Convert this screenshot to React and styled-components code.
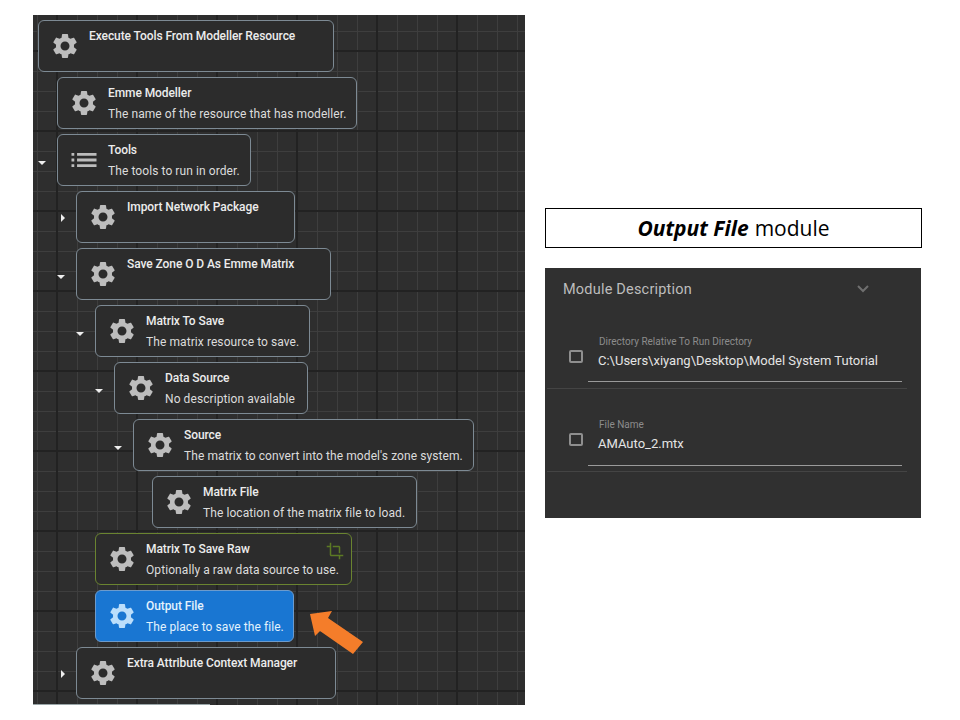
import React from 'react'
import styled, { createGlobalStyle } from 'styled-components'

const GlobalStyle = createGlobalStyle`
  html, body {
    margin: 0;
    padding: 0;
    background: #fff;
    font-family: Roboto, "Liberation Sans", sans-serif;
  }
`

const Page = styled.div`
  display: flex;
  align-items: flex-start;
  width: 960px;
  height: 720px;
  overflow: hidden;
  padding: 15px 0 0 33px;
  box-sizing: border-box;
`

const Canvas = styled.div`
  position: relative;
  flex: 0 0 492px;
  height: 690px;
  overflow: hidden;
  background-color: #2e2e2e;
  background-image:
    linear-gradient(to right, #222222 2px, transparent 2px),
    linear-gradient(to bottom, #222222 2px, transparent 2px),
    linear-gradient(to right, #3e3e3e 1px, transparent 1px),
    linear-gradient(to bottom, #3e3e3e 1px, transparent 1px);
  background-size: 80px 80px, 80px 80px, 20px 20px, 20px 20px;
  background-position: 23px 0, 0 35px, 4px 0, 0 16px;
`

const Tree = styled.div`
  display: flex;
  flex-direction: column;
  gap: 5px;
  padding: 5px 0 0 5px;
`

const Row = styled.div`
  display: flex;
  align-items: stretch;
`

const Indent = styled.div`
  flex: 0 0 ${(p) => p.$depth * 19}px;
  display: flex;
  justify-content: flex-end;
  align-items: center;
`

const CaretDown = styled.div`
  width: 0;
  height: 0;
  margin: 5px 11px 0 0;
  border-left: 4px solid transparent;
  border-right: 4px solid transparent;
  border-top: 4px solid #eeeeee;
`

const CaretRight = styled.div`
  width: 0;
  height: 0;
  margin: 2px 11px 0 0;
  border-top: 4px solid transparent;
  border-bottom: 4px solid transparent;
  border-left: 4px solid #eeeeee;
`

const borderColors = { plain: '#7d8a94', green: '#6a8430', blue: '#6d9bcc' }

const Card = styled.div`
  position: relative;
  display: flex;
  align-items: center;
  width: ${(p) => p.$width}px;
  height: 52px;
  box-sizing: border-box;
  padding-left: 12px;
  border: 1px solid ${(p) => borderColors[p.$kind]};
  border-radius: 6px;
  background: ${(p) => (p.$kind === 'blue' ? '#1976d2' : '#2c2c2c')};
`

const IconBox = styled.svg`
  flex: 0 0 30px;
  width: 30px;
  height: 30px;
  margin-left: -1px;
  fill: ${(p) => (p.$kind === 'blue' ? '#bbdefb' : '#bdbdbd')};
`

const CardText = styled.div`
  display: flex;
  flex-direction: column;
  align-self: flex-start;
  margin-left: 9px;
  padding-top: 7px;
  white-space: nowrap;
`

const Title = styled.div`
  font-size: 12px;
  font-weight: 500;
  line-height: 16px;
  letter-spacing: -0.08px;
  color: ${(p) => (p.$kind === 'blue' ? '#e3f2fd' : '#ececec')};
`

const Subtitle = styled.div`
  margin-top: 5px;
  font-size: 12px;
  line-height: 16px;
  letter-spacing: 0.08px;
  color: ${(p) => (p.$kind === 'blue' ? '#e3f2fd' : '#dcdcdc')};
`

const CropBadge = styled.svg`
  position: absolute;
  top: 8px;
  right: 7px;
  width: 18px;
  height: 18px;
  fill: #5c7a24;
`

const BottomEdge = styled.div`
  width: 177px;
  height: 1px;
  margin-left: -5px;
  background: #9aa6a8;
`

const ArrowMark = styled.svg`
  position: absolute;
  left: 270px;
  top: 590px;
  width: 70px;
  height: 60px;
`

const Side = styled.div`
  flex: 0 0 377px;
  display: flex;
  flex-direction: column;
  gap: 20px;
  margin: 193px 0 0 20px;
`

const Caption = styled.div`
  height: 40px;
  box-sizing: border-box;
  display: flex;
  align-items: center;
  justify-content: center;
  gap: 6px;
  border: 1px solid #000;
  font-family: "Open Sans", "Liberation Sans", sans-serif;
  font-size: 21px;
  color: #000;
  white-space: pre;
`

const CaptionStrong = styled.b`
  font-style: italic;
`

const Panel = styled.div`
  width: 376px;
  height: 250px;
  background: #303030;
  display: flex;
  flex-direction: column;
`

const PanelHead = styled.div`
  display: flex;
  align-items: center;
  height: 42px;
  padding-left: 18px;
  font-size: 14.5px;
  letter-spacing: 0.2px;
  color: #bdbdbd;
`

const Chevron = styled.svg`
  width: 20px;
  height: 20px;
  margin-left: 161px;
  fill: none;
  stroke: #6f6f6f;
  stroke-width: 2;
`

const Field = styled.div`
  display: flex;
  height: ${(p) => p.$h}px;
  margin: 0 14px 0 2px;
  border-bottom: 1px solid #444;
  box-sizing: border-box;
  padding: 0 5px 0 0;
`

const CheckBox = styled.div`
  flex: 0 0 14px;
  width: 14px;
  height: 13px;
  box-sizing: border-box;
  margin: ${(p) => p.$top}px 0 0 22px;
  border: 2px solid #8f8f8f;
  border-radius: 2px;
`

const FieldBody = styled.div`
  flex: 1;
  margin-left: 5px;
  height: ${(p) => p.$h}px;
  border-bottom: 1px solid #9a9a9a;
  box-sizing: border-box;
  padding-left: 10px;
`

const FieldLabel = styled.div`
  margin: ${(p) => p.$top}px 0 0 1px;
  font-size: 10px;
  line-height: 12px;
  color: #8c8c8c;
`

const FieldValue = styled.div`
  margin-top: 5px;
  font-size: 13px;
  line-height: 16px;
  color: #e4e4e4;
  white-space: nowrap;
`

const GEAR = 'M19.14 12.94c.04-.3.06-.61.06-.94 0-.32-.02-.64-.07-.94l2.03-1.58c.18-.14.23-.41.12-.61l-1.92-3.32c-.12-.22-.37-.29-.59-.22l-2.39.96c-.5-.38-1.03-.7-1.62-.94l-.36-2.54c-.04-.24-.24-.41-.48-.41h-3.84c-.24 0-.43.17-.47.41l-.36 2.54c-.59.24-1.13.57-1.62.94l-2.39-.96c-.22-.08-.47 0-.59.22L2.74 8.87c-.12.21-.08.47.12.61l2.03 1.58c-.05.3-.09.63-.09.94s.02.64.07.94l-2.03 1.58c-.18.14-.23.41-.12.61l1.92 3.32c.12.22.37.29.59.22l2.39-.96c.5.38 1.03.7 1.62.94l.36 2.54c.05.24.24.41.48.41h3.84c.24 0 .44-.17.47-.41l.36-2.54c.59-.24 1.13-.56 1.62-.94l2.39.96c.22.08.47 0 .59-.22l1.92-3.32c.12-.22.07-.47-.12-.61l-2.01-1.58zM12 15.6c-1.98 0-3.6-1.62-3.6-3.6s1.62-3.6 3.6-3.6 3.6 1.62 3.6 3.6-1.62 3.6-3.6 3.6z'
const LIST = 'M3 13h2v-2H3v2zm0 4h2v-2H3v2zm0-8h2V7H3v2zm4 4h14v-2H7v2zm0 4h14v-2H7v2zM7 7v2h14V7H7z'
const CROP = 'M17 15h2V7c0-1.1-.9-2-2-2H9v2h8v8zM7 17V1H5v4H1v2h4v10c0 1.1.9 2 2 2h10v4h2v-4h4v-2H7z'

const modules = [
  { depth: 0, width: 296, title: 'Execute Tools From Modeller Resource' },
  { depth: 1, width: 300, title: 'Emme Modeller', sub: 'The name of the resource that has modeller.' },
  { depth: 1, width: 194, title: 'Tools', sub: 'The tools to run in order.', icon: LIST, box: '1.2 1.2 21.6 21.6', caret: 'down' },
  { depth: 2, width: 219, title: 'Import Network Package', caret: 'right' },
  { depth: 2, width: 255, title: 'Save Zone O D As Emme Matrix', caret: 'down' },
  { depth: 3, width: 215, title: 'Matrix To Save', sub: 'The matrix resource to save.', caret: 'down' },
  { depth: 4, width: 194, title: 'Data Source', sub: 'No description available', caret: 'down' },
  { depth: 5, width: 341, title: 'Source', sub: "The matrix to convert into the model's zone system.", caret: 'down' },
  { depth: 6, width: 265, title: 'Matrix File', sub: 'The location of the matrix file to load.' },
  { depth: 3, width: 257, title: 'Matrix To Save Raw', sub: 'Optionally a raw data source to use.', kind: 'green' },
  { depth: 3, width: 199, title: 'Output File', sub: 'The place to save the file.', kind: 'blue' },
  { depth: 2, width: 260, title: 'Extra Attribute Context Manager', caret: 'right' },
]

const ModuleRow = ({ depth, width, title, sub, icon = GEAR, box = '0 0 24 24', caret, kind = 'plain' }) => (
  <Row>
    <Indent $depth={depth}>
      {caret === 'down' && <CaretDown />}
      {caret === 'right' && <CaretRight />}
    </Indent>
    <Card $width={width} $kind={kind}>
      <IconBox $kind={kind} viewBox={box}>
        <path d={icon} />
      </IconBox>
      <CardText>
        <Title $kind={kind}>{title}</Title>
        {sub && <Subtitle $kind={kind}>{sub}</Subtitle>}
      </CardText>
      {kind === 'green' && (
        <CropBadge viewBox="0 0 24 24">
          <path d={CROP} />
        </CropBadge>
      )}
    </Card>
  </Row>
)

const App = () => (
  <Page>
    <GlobalStyle />
    <Canvas>
      <Tree>
        {modules.map((m) => (
          <ModuleRow key={m.title} {...m} />
        ))}
        <BottomEdge />
      </Tree>
      <ArrowMark viewBox="0 0 70 60">
        <polygon points="7,9 29,6 25,13 60,37 50,49 17,26 12,31" fill="#f47d2a" />
      </ArrowMark>
    </Canvas>
    <Side>
      <Caption>
        <CaptionStrong>Output File</CaptionStrong>
        <span>module</span>
      </Caption>
      <Panel>
        <PanelHead>
          Module Description
          <Chevron viewBox="0 0 20 20">
            <path d="M5 7l5 5 5-5" />
          </Chevron>
        </PanelHead>
        <Field $h={79}>
          <CheckBox $top={40} />
          <FieldBody $h={72}>
            <FieldLabel $top={26}>Directory Relative To Run Directory</FieldLabel>
            <FieldValue>C:\Users\xiyang\Desktop\Model System Tutorial</FieldValue>
          </FieldBody>
        </Field>
        <Field $h={83}>
          <CheckBox $top={44} />
          <FieldBody $h={77}>
            <FieldLabel $top={30}>File Name</FieldLabel>
            <FieldValue>AMAuto_2.mtx</FieldValue>
          </FieldBody>
        </Field>
      </Panel>
    </Side>
  </Page>
)

export default App
